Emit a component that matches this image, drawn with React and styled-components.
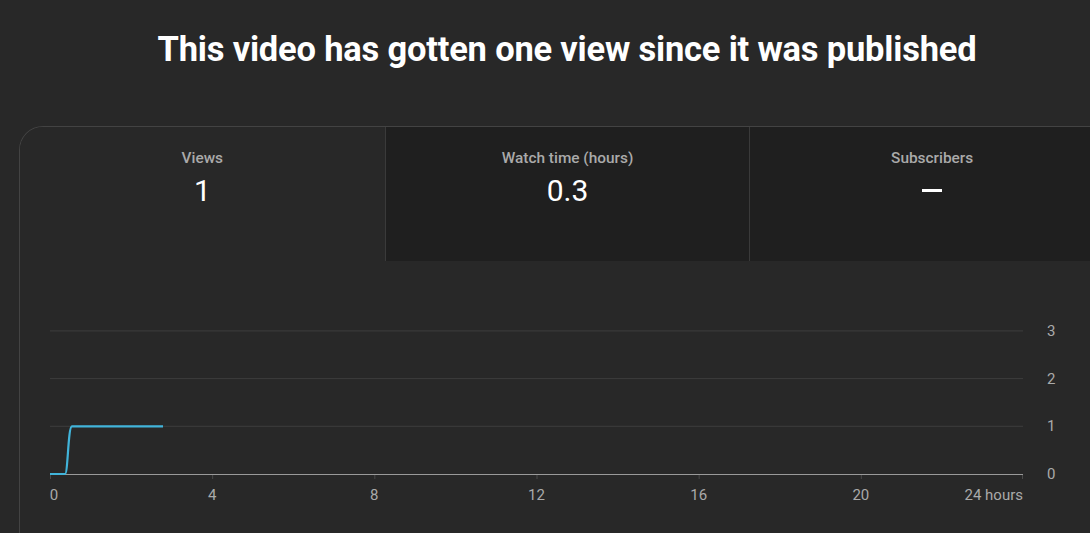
import styled, { createGlobalStyle } from 'styled-components'

const GlobalStyle = createGlobalStyle`
  html, body {
    margin: 0;
    padding: 0;
    background: #282828;
    overflow: hidden;
  }
  body {
    font-family: Roboto, "Liberation Sans", Arial, sans-serif;
  }
`

const Page = styled.div`
  width: 1134px;
  height: 533px;
  padding: 0 19px;
  box-sizing: border-box;
  display: flex;
  flex-direction: column;
`

const Title = styled.h1`
  margin: 0;
  padding-top: 27px;
  height: 126px;
  flex: none;
  box-sizing: border-box;
  text-align: center;
  color: #fff;
  font-size: 34.5px;
  font-weight: 700;
  line-height: 44px;
  letter-spacing: -0.2px;
`

const Card = styled.div`
  flex: 1;
  border: 1px solid #434343;
  border-bottom: none;
  border-top-left-radius: 24px;
  overflow: hidden;
`

const Tabs = styled.div`
  display: grid;
  grid-template-columns: repeat(3, 1fr);
  height: 134px;
`

const Tab = styled.div`
  background: ${p => (p.$active ? '#282828' : '#1f1f1f')};
  border-left: ${p => (p.$first ? 'none' : '1px solid #3a3a3a')};
  display: flex;
  flex-direction: column;
  align-items: center;
  padding-top: 22px;
`

const TabLabel = styled.div`
  color: #aaaaaa;
  font-size: 15.4px;
  font-weight: 500;
  line-height: 18px;
`

const TabValue = styled.div`
  color: #fff;
  font-size: 30px;
  font-weight: 400;
  line-height: 36px;
  margin-top: 6px;
`

const Dash = styled.div`
  width: 20px;
  height: 3px;
  background: #fff;
  margin-top: 22px;
`

const Chart = styled.svg`
  display: block;
  margin-top: 1px;
`

const tabs = [
  { label: 'Views', value: '1', active: true },
  { label: 'Watch time (hours)', value: '0.3' },
  { label: 'Subscribers', value: null },
]

function ViewsChart() {
  // page coords: chart svg starts at x=20, y=262
  const ox = 20
  const oy = 262
  const x0 = 50 - ox
  const x1 = 1023 - ox
  const yFor = v => 474 - oy - v * 47.7
  const xFor = h => x0 + ((x1 - x0) * h) / 24
  const labelsX = [0, 4, 8, 12, 16, 20]
  return (
    <Chart width="1094" height="270">
      {[1, 2, 3].map(v => (
        <line key={v} x1={x0} x2={x1} y1={yFor(v)} y2={yFor(v)} stroke="#3d3d3d" strokeWidth="1" />
      ))}
      <line x1={x0} x2={x1} y1={yFor(0) + 0.5} y2={yFor(0) + 0.5} stroke="#9a9a9a" strokeWidth="1" />
      {[0, 1, 2, 3].map(v => (
        <text key={v} x={1047 - ox} y={yFor(v) + 5} fill="#aaaaaa" fontSize="15" fontFamily="Roboto, sans-serif">
          {v}
        </text>
      ))}
      {labelsX.map(h => (
        <g key={h}>
          <line x1={xFor(h) + 0.5} x2={xFor(h) + 0.5} y1={yFor(0) + 1} y2={yFor(0) + 5} stroke="#4a4a4a" />
          <text x={xFor(h) + (h === 0 ? 4 : 0)} y={yFor(0) + 26} fill="#aaaaaa" fontSize="15" textAnchor="middle" fontFamily="Roboto, sans-serif">
            {h}
          </text>
        </g>
      ))}
      <line x1={x1 - 0.5} x2={x1 - 0.5} y1={yFor(0) + 1} y2={yFor(0) + 5} stroke="#4a4a4a" />
      <text x={x1} y={yFor(0) + 26} fill="#aaaaaa" fontSize="15" textAnchor="end" fontFamily="Roboto, sans-serif">
        24 hours
      </text>
      <path
        d={`M${x0} ${yFor(0)} L${65 - ox} ${yFor(0)} C${68 - ox} ${yFor(0)} ${68 - ox} ${yFor(1)} ${72 - ox} ${yFor(1)} L${163 - ox} ${yFor(1)}`}
        fill="none"
        stroke="#41b4da"
        strokeWidth="2.2"
        strokeLinejoin="round"
      />
    </Chart>
  )
}

export default function App() {
  return (
    <>
      <GlobalStyle />
      <Page>
        <Title>This video has gotten one view since it was published</Title>
        <Card>
          <Tabs>
            {tabs.map((t, i) => (
              <Tab key={t.label} $active={t.active} $first={i === 0}>
                <TabLabel>{t.label}</TabLabel>
                {t.value !== null ? <TabValue>{t.value}</TabValue> : <Dash />}
              </Tab>
            ))}
          </Tabs>
          <ViewsChart />
        </Card>
      </Page>
    </>
  )
}
